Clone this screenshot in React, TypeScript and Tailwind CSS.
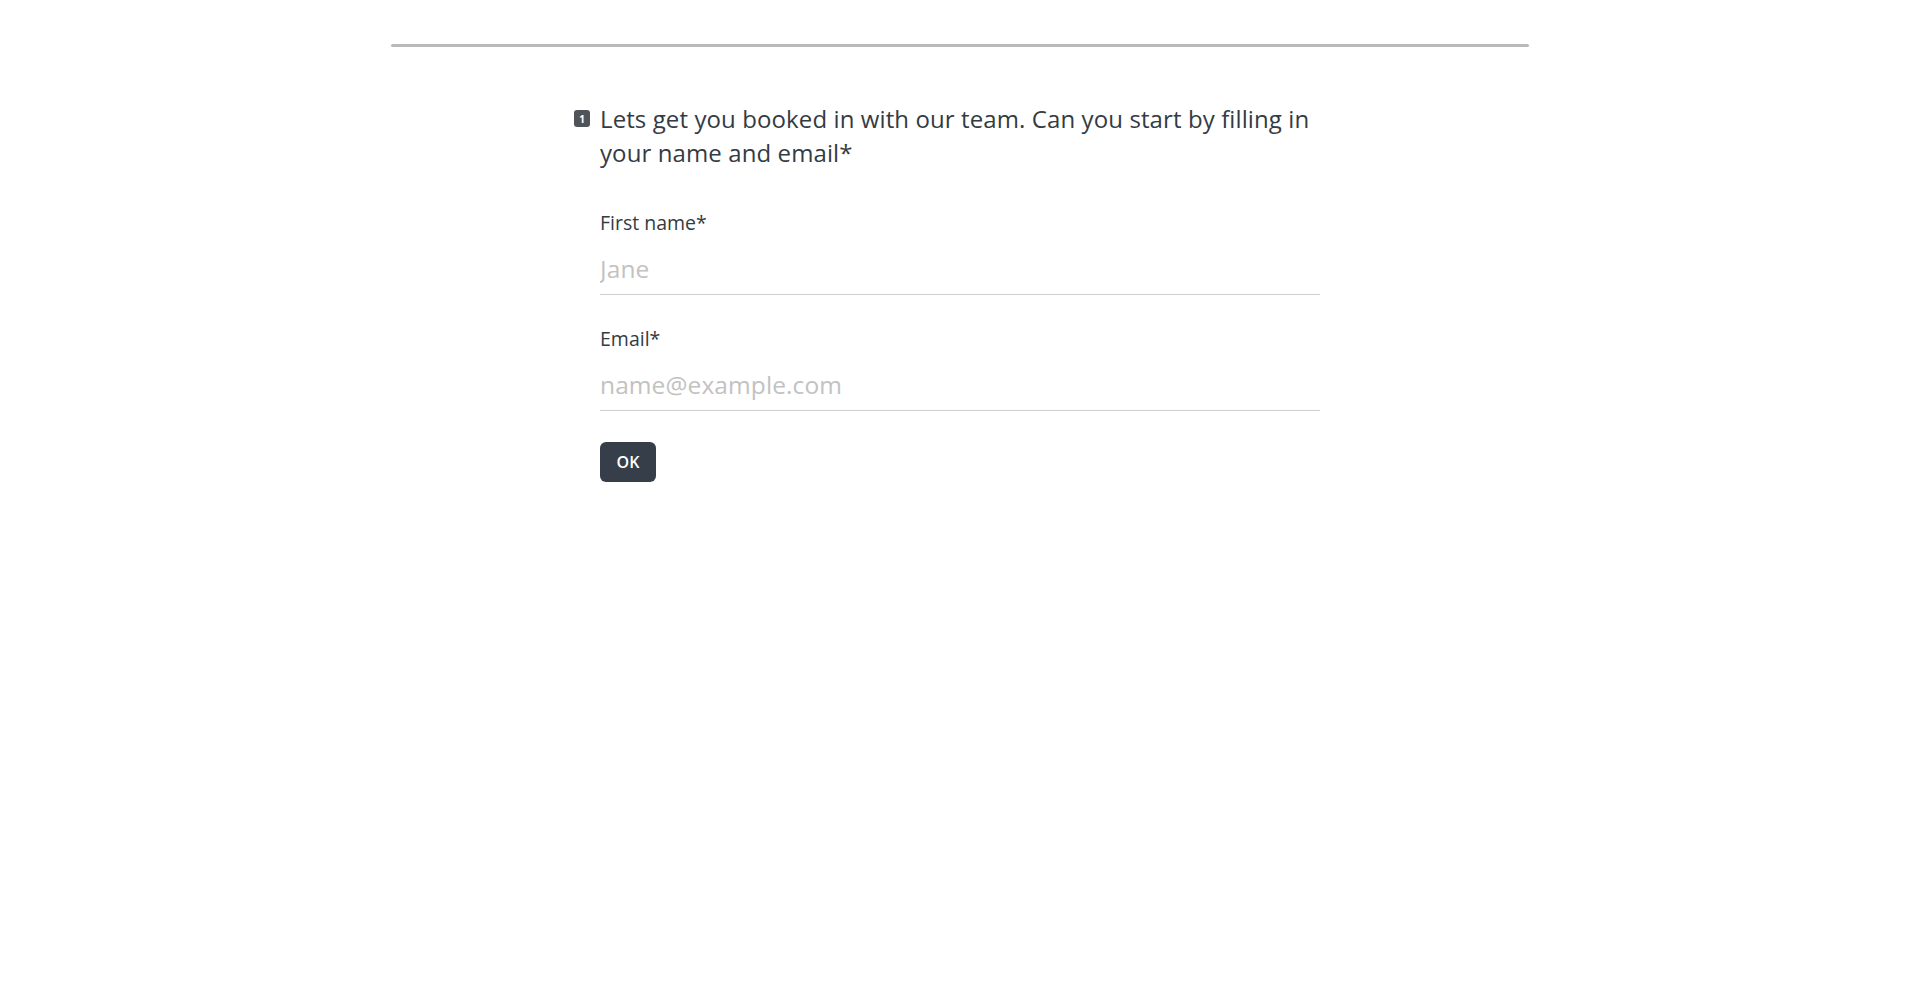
import React from 'react';

const App: React.FC = () => {
    return (
        <div className="min-h-[993px] bg-white font-['Open_Sans',sans-serif] text-[#343b43]">
            {/* barra de progreso superior */}
            <div className="w-[1138px] mx-auto pt-[44px]">
                <div className="h-[3px] bg-[#b9b9b9] rounded-full" />
            </div>

            <div className="w-[720px] mx-auto mt-[55px]">
                <div className="relative">
                    <span className="absolute -left-[26px] top-[8px] w-[16px] h-[17px] rounded-[3px] bg-[#505459] text-white text-[10px] font-bold flex items-center justify-center leading-none">
                        1
                    </span>
                    <h1 className="text-[24px] leading-[34px] font-normal tracking-[0.1px]">
                        Lets get you booked in with our team. Can you start by filling in your name and email*
                    </h1>
                </div>

                <form className="mt-[41px] flex flex-col" onSubmit={e => e.preventDefault()}>
                    <label className="text-[19.5px] leading-[24px]">First name*</label>
                    <input
                        className="mt-[9px] h-[51px] pb-[2px] border-b border-[#cfcfcf] outline-none text-[24.5px] tracking-[0.1px] placeholder:text-[#c2c2c2] bg-transparent"
                        placeholder="Jane"
                    />

                    <label className="mt-[32px] text-[19.5px] leading-[24px]">Email*</label>
                    <input
                        className="mt-[9px] h-[51px] pb-[2px] border-b border-[#cfcfcf] outline-none text-[24.5px] tracking-[0.1px] placeholder:text-[#c2c2c2] bg-transparent"
                        placeholder="name@example.com"
                    />

                    <div className="mt-[31px]">
                        <button className="w-[56px] h-[40px] rounded-[6px] bg-[#363f49] text-white text-[16px] font-semibold">
                            OK
                        </button>
                    </div>
                </form>
            </div>
        </div>
    );
};

export default App;
